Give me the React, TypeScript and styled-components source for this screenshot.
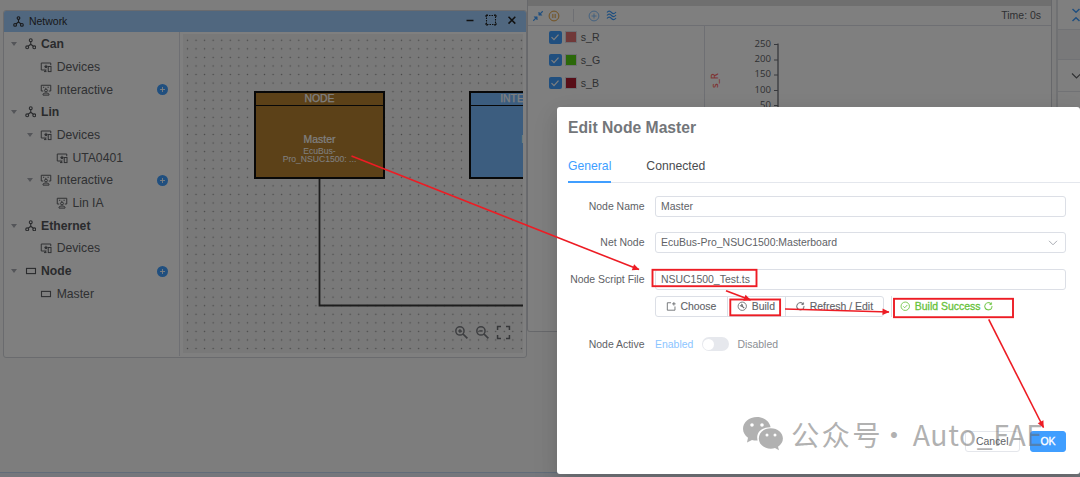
import React from "react";
import styled, { createGlobalStyle } from "styled-components";

const Global = createGlobalStyle`
  * { box-sizing: border-box; }
  html, body { margin: 0; padding: 0; overflow: hidden; }
  body { font-family: "Liberation Sans", Arial, sans-serif; font-size: 10.46px; color: #606266; }
`;

const Screen = styled.div`
  position: relative;
  width: 1080px;
  height: 477px;
  overflow: hidden;
  display: flex;
  flex-direction: column;
  background: #fafafa;
`;
const Desktop = styled.div`
  position: relative;
  flex: 1;
  overflow: hidden;
`;
const StatusBar = styled.div`
  height: 5px;
  background: #eaeff8;
  border-top: 1px solid #c4d8f2;
`;

/* Network window */
const NetWindow = styled.section`
  position: absolute;
  left: 3px;
  top: 10px;
  width: 524px;
  height: 348px;
  display: flex;
  flex-direction: column;
  background: #fff;
  border: 1px solid #d4d7dc;
  border-radius: 3px;
  overflow: hidden;
`;
const TitleBar = styled.header`
  height: 21px;
  flex: none;
  display: flex;
  align-items: center;
  padding: 0 8px 0 8.5px;
  gap: 5.5px;
  background: #a0cfff;
  color: #303133;
`;
const TitleText = styled.span`
  flex: 1;
  line-height: 20px;
`;
const WindowButtons = styled.div`
  display: flex;
  align-items: center;
  gap: 9px;
  padding-bottom: 3px;
`;
const NetBody = styled.div`
  flex: 1;
  display: flex;
  min-height: 0;
`;
const Tree = styled.nav`
  width: 176px;
  flex: none;
  padding-top: 0.8px;
  border-right: 1px solid #dcdfe6;
  height: 324px;
`;
const TreeRow = styled.div<{ $level: number; $bold?: boolean }>`
  height: 22.7px;
  display: flex;
  align-items: center;
  padding-left: ${(p) => p.$level * 15.7}px;
  padding-right: 11px;
  font-size: 12.2px;
  font-weight: ${(p) => (p.$bold ? 700 : 400)};
  color: ${(p) => (p.$bold ? "#55575b" : "#606266")};
`;
const Caret = styled.span<{ $hidden?: boolean }>`
  width: 20.5px;
  flex: none;
  display: flex;
  justify-content: center;
  visibility: ${(p) => (p.$hidden ? "hidden" : "visible")};
  &::before {
    content: "";
    border: 3.3px solid transparent;
    border-top: 4px solid #a8abb2;
    border-bottom: 0;
  }
`;
const TreeIcon = styled.span`
  width: 12px;
  margin-right: 4.5px;
  display: flex;
`;
const TreeLabel = styled.span`
  flex: 1;
  white-space: nowrap;
`;
const CanvasArea = styled.div`
  position: relative;
  flex: 1;
  margin: 2px 3px 4px 3px;
  overflow: hidden;
  background-color: #f3f3f3;
  background-image: radial-gradient(circle, #909090 0.5px, transparent 1.05px);
  background-size: 8.573px 8.573px;
  background-position: 0.2px 2px;
`;
const GraphNode = styled.div<{ $x: number; $bg: string }>`
  position: absolute;
  left: ${(p) => p.$x}px;
  top: 57px;
  width: 131px;
  height: 87.5px;
  border: 2px solid #111;
  background: ${(p) => p.$bg};
  color: #fff;
  text-align: center;
  display: flex;
  flex-direction: column;
`;
const NodeHead = styled.div`
  height: 12.5px;
  line-height: 12.5px;
  border-bottom: 1px solid #111;
  font-size: 10.4px;
  -webkit-text-stroke: 0.25px currentColor;
`;
const NodeMain = styled.div`
  flex: 1;
  padding-top: 27px;
  font-size: 10.4px;
  line-height: 14px;
  -webkit-text-stroke: 0.2px currentColor;
`;
const NodeSub = styled.div`
  font-size: 8.6px;
  line-height: 8.7px;
  -webkit-text-stroke: 0;
`;
const Wires = styled.svg`
  position: absolute;
  inset: 0;
`;
const CanvasTools = styled.div`
  position: absolute;
  right: 12px;
  bottom: 13.5px;
  display: flex;
  gap: 6px;
`;

/* Trace window */
const PlotWindow = styled.section`
  position: absolute;
  left: 527px;
  top: 0;
  width: 525px;
  height: 332px;
  display: flex;
  flex-direction: column;
  border: 1px solid #cfd1d6;
  border-top: 0;
  border-radius: 0 0 3px 3px;
  background: #fff;
`;
const PlotTitle = styled.div`
  height: 6px;
  background: #dedede;
`;
const PlotToolbar = styled.div`
  height: 20px;
  display: flex;
  align-items: center;
  padding: 0 10px 0 4px;
  border-bottom: 1px solid #dcdfe6;
`;
const ToolSep = styled.i`
  width: 1px;
  height: 13px;
  margin: 0 13.5px;
  background: #dcdfe6;
`;
const Time = styled.span`
  margin-left: auto;
  line-height: 18px;
`;
const PlotBody = styled.div`
  flex: 1;
  display: flex;
`;
const SignalList = styled.div`
  width: 177px;
  border-right: 1px solid #dcdfe6;
`;
const Signal = styled.label`
  height: 22.8px;
  display: flex;
  align-items: center;
  padding-left: 21px;
  font-size: 10.6px;
`;
const Check = styled.span`
  width: 12.5px;
  height: 12.5px;
  border-radius: 2px;
  background: #409eff;
  display: flex;
  align-items: center;
  justify-content: center;
  margin-right: 3.7px;
`;
const Swatch = styled.span<{ $c: string }>`
  width: 12px;
  height: 12px;
  border: 1px solid #dcdfe6;
  background: ${(p) => p.$c};
  margin-right: 3.5px;
`;

/* Side pane */
const SidePane = styled.aside`
  position: absolute;
  left: 1056px;
  top: 0;
  width: 40px;
  bottom: 0;
  border-left: 2px solid #e0e2e6;
  background: #fff;
`;
const SideRow = styled.div<{ $h: number; $bg?: string }>`
  height: ${(p) => p.$h}px;
  display: flex;
  align-items: center;
  padding-left: 13px;
  border-bottom: 1px solid #e2e4ea;
  background: ${(p) => p.$bg || "#fff"};
`;

/* Dialog */
const Overlay = styled.div`
  position: absolute;
  inset: 0;
  display: flex;
  justify-content: flex-end;
  align-items: flex-end;
  padding-bottom: 3.5px;
  background: rgba(0, 0, 0, 0.5);
`;
const Dialog = styled.div`
  width: 523px;
  height: 367px;
  display: flex;
  flex-direction: column;
  background: #fff;
  border-radius: 3px;
  box-shadow: 0 10px 28px 3px rgba(0, 0, 0, 0.06), 0 7px 17px rgba(0, 0, 0, 0.1);
`;
const DialogTitle = styled.h2`
  margin: 0;
  padding: 10px 11px 0;
  font-size: 15.7px;
  line-height: 22px;
  font-weight: 700;
  color: #73767a;
`;
const Tabs = styled.div`
  display: flex;
  gap: 35px;
  margin: 10px 0 0 11px;
  height: 34.5px;
  border-bottom: 1.7px solid #e4e7ed;
`;
const Tab = styled.button<{ $active?: boolean }>`
  height: 34.5px;
  padding: 2px 0 0;
  border: 0;
  border-bottom: 2px solid ${(p) => (p.$active ? "#409eff" : "transparent")};
  background: none;
  font: 12.2px "Liberation Sans", Arial, sans-serif;
  color: ${(p) => (p.$active ? "#409eff" : "#4a4c50")};
`;
const Form = styled.div`
  display: flex;
  flex-direction: column;
  padding: 12.5px 14px 0 0;
`;
const Field = styled.div<{ $h?: number }>`
  display: flex;
  align-items: center;
  height: 21px;
  margin-bottom: ${(p) => p.$h ?? 15.7}px;
`;
const Label = styled.label`
  width: 87.5px;
  margin-right: 10.5px;
  text-align: right;
  white-space: nowrap;
`;
const Input = styled.div`
  flex: 1;
  height: 21px;
  display: flex;
  align-items: center;
  justify-content: space-between;
  padding: 0 7px 0 5px;
  border: 1px solid #dcdfe6;
  border-radius: 3px;
`;
const ButtonGroup = styled.div`
  display: flex;
  height: 21px;
  border: 1px solid #dcdfe6;
  border-radius: 3px;
`;
const GroupButton = styled.button<{ $w: number }>`
  width: ${(p) => p.$w}px;
  padding: 0 1px 0 0;
  display: flex;
  align-items: center;
  justify-content: center;
  gap: 4.3px;
  border: 0;
  background: none;
  font: inherit;
  color: inherit;
  -webkit-text-stroke: 0.1px currentColor;
  & + & {
    border-left: 1px solid #dcdfe6;
  }
`;
const Result = styled.div`
  display: flex;
  align-items: center;
  gap: 4.3px;
  height: 21px;
  margin-left: 7px;
  padding-left: 8px;
  border-left: 1px solid #dcdfe6;
  color: #67c23a;
  -webkit-text-stroke: 0.3px currentColor;
`;
const ResultRefresh = styled.span`
  display: flex;
  margin-left: -2px;
`;
const SwitchText = styled.span<{ $on?: boolean }>`
  color: ${(p) => (p.$on ? "#8cc5ff" : "#8c8f94")};
`;
const Switch = styled.span`
  width: 27px;
  height: 14px;
  margin: 0 8.5px;
  padding: 1.5px;
  border-radius: 7px;
  background: #e6e8ed;
  &::before {
    content: "";
    display: block;
    width: 11px;
    height: 11px;
    border-radius: 50%;
    background: #fff;
  }
`;
const Footer = styled.footer`
  margin-top: auto;
  display: flex;
  justify-content: flex-end;
  gap: 10.5px;
  padding: 0 14px 21.5px 0;
`;
const FootButton = styled.button<{ $primary?: boolean }>`
  width: ${(p) => (p.$primary ? 36 : 54.5)}px;
  height: 21px;
  padding: 0;
  font: inherit;
  border-radius: 3px;
  border: 1px solid ${(p) => (p.$primary ? "#409eff" : "#e4e6eb")};
  background: ${(p) => (p.$primary ? "#409eff" : "#fff")};
  color: ${(p) => (p.$primary ? "#fff" : "#606266")};
  -webkit-text-stroke: ${(p) => (p.$primary ? 0.35 : 0)}px currentColor;
`;

/* Annotation layers */
const Watermark = styled.div`
  position: absolute;
  left: 742px;
  top: 411.5px;
  height: 44px;
  display: flex;
  align-items: center;
  color: rgba(100, 100, 100, 0.5);
  font-family: "Noto Sans CJK SC", sans-serif;
  font-weight: 400;
  font-size: 28.4px;
  line-height: 44px;
  white-space: pre;
`;
const MarkText = styled.span<{ $ml: number; $ls?: number }>`
  margin-left: ${(p) => p.$ml}px;
  letter-spacing: ${(p) => p.$ls || 0}px;
`;
const Marks = styled.svg`
  position: absolute;
  inset: 0;
`;

const NetworkIcon = ({ s = 11.5 }: { s?: number }) => (
  <svg width={s} height={s} viewBox="0 0 24 24" fill="none" stroke="currentColor" strokeWidth="2.4">
    <circle cx="12" cy="4.6" r="3" />
    <circle cx="4.6" cy="19.4" r="3" />
    <circle cx="19.4" cy="19.4" r="3" />
    <path d="M12 7.6v6M12 13l-5.4 4.2M12 13l5.4 4.2" />
  </svg>
);
const DevicesIcon = () => (
  <svg width="12" height="12" viewBox="0 0 24 24" fill="none" stroke="currentColor" strokeWidth="2">
    <path d="M13 18H2.500V4h19v4.500M8 21.200h5M10.500 18v3" />
    <rect x="16.5" y="11" width="5.5" height="10.2" />
    <path fill="currentColor" stroke="none" d="M12 6.600l1.300 2.900 3.100.3-2.300 2 .7 3.100-2.800-1.600-2.800 1.600.7-3.100-2.300-2 3.100-.3z" />
  </svg>
);
const InteractiveIcon = () => (
  <svg width="12" height="12" viewBox="0 0 24 24" fill="none" stroke="currentColor" strokeWidth="2">
    <path d="M6.500 14H2.500V2.500h19V14h-4" />
    <circle cx="12" cy="13" r="2.8" />
    <path d="M6 22.200v-1.600c0-1.600 3-2.600 6-2.600s6 1 6 2.600v1.600z" />
    <path d="M6 6.500h2.500M10.500 8.500h2M15 6.500h2.500" />
  </svg>
);
const NodeIcon = () => (
  <svg width="12" height="12" viewBox="0 0 24 24" fill="none" stroke="currentColor" strokeWidth="2.2">
    <rect x="3" y="6.8" width="18" height="10.4" />
  </svg>
);
const PlusDot = () => (
  <svg width="11" height="11" viewBox="0 0 22 22">
    <circle cx="11" cy="11" r="11" fill="#409eff" />
    <path d="M11 6v10M6 11h10" stroke="#fff" strokeWidth="1.8" />
  </svg>
);
const RefreshIcon = () => (
  <svg width="10.5" height="10.5" viewBox="0 0 1024 1024" fill="currentColor" stroke="currentColor" strokeWidth="25">
    <path d="M784.512 230.272v-50.56a32 32 0 1 1 64 0v149.056a32 32 0 0 1-32 32H667.52a32 32 0 1 1 0-64h92.992A320 320 0 1 0 524.8 833.152a320 320 0 0 0 320-320h64a384 384 0 0 1-384 384 384 384 0 0 1-384-384 384 384 0 0 1 643.712-282.88z" />
  </svg>
);
const ChooseIcon = () => (
  <svg width="10.5" height="10.5" viewBox="0 0 24 24" fill="none" stroke="currentColor" strokeWidth="1.9">
    <path d="M11.500 4H3v17h17.500v-8.500M18 2.500v8M14 6.500h8" />
  </svg>
);
const BuildIcon = () => (
  <svg width="10.5" height="10.5" viewBox="0 0 24 24" fill="none" stroke="currentColor" strokeWidth="1.9">
    <circle cx="12" cy="12" r="9.5" />
    <path d="M11.500 11.500l5 5" strokeWidth="2.6" />
    <path d="M7 9.800a3.200 3.200 0 0 0 5.600 1.600A3.200 3.200 0 0 0 9.800 6.700l1 2.400-1.700 1.600z" fill="currentColor" strokeWidth="1" />
  </svg>
);
const CircleCheck = () => (
  <svg width="10.5" height="10.5" viewBox="0 0 24 24" fill="none" stroke="currentColor" strokeWidth="1.9">
    <circle cx="12" cy="12" r="9.6" />
    <path d="M7.500 12.200l3.200 3.200 6-6.200" />
  </svg>
);
const ZoomIcon = ({ plus }: { plus?: boolean }) => (
  <svg width="15" height="15" viewBox="0 0 24 24" fill="none" stroke="#7b7d82" strokeWidth="2.4">
    <circle cx="9.5" cy="9.5" r="6.6" />
    <path d="M14.400 14.400l7 7" strokeWidth="2.8" />
    <path d={plus ? "M9.5 6.8v5.4M6.8 9.500h5.400" : "M6.8 9.500h5.400"} />
  </svg>
);
const FitIcon = () => (
  <svg width="15" height="15" viewBox="0 0 24 24" fill="none" stroke="#6c6e73" strokeWidth="2.4">
    <path d="M2.500 8V2.500H8M16 2.500h5.500V8M21.500 16v5.500H16M8 21.500H2.500V16" />
  </svg>
);

const icons = { net: NetworkIcon, dev: DevicesIcon, ia: InteractiveIcon, node: NodeIcon };
type Row = { level: number; icon: keyof typeof icons; text: string; open?: boolean; add?: boolean };
const rows: Row[] = [
  { level: 0, icon: "net", text: "Can", open: true },
  { level: 1, icon: "dev", text: "Devices" },
  { level: 1, icon: "ia", text: "Interactive", add: true },
  { level: 0, icon: "net", text: "Lin", open: true },
  { level: 1, icon: "dev", text: "Devices", open: true },
  { level: 2, icon: "dev", text: "UTA0401" },
  { level: 1, icon: "ia", text: "Interactive", open: true, add: true },
  { level: 2, icon: "ia", text: "Lin IA" },
  { level: 0, icon: "net", text: "Ethernet", open: true },
  { level: 1, icon: "dev", text: "Devices" },
  { level: 0, icon: "node", text: "Node", open: true, add: true },
  { level: 1, icon: "node", text: "Master" },
];
const signals = [
  { name: "s_R", color: "#e07070" },
  { name: "s_G", color: "#56d012" },
  { name: "s_B", color: "#b01c30" },
];
const ticks = [
  { v: 250, y: 44 },
  { v: 200, y: 59.5 },
  { v: 150, y: 74.5 },
  { v: 100, y: 90 },
  { v: 50, y: 105 },
];

const Arrow = ({ a, b }: { a: [number, number]; b: [number, number] }) => {
  const angle = (Math.atan2(b[1] - a[1], b[0] - a[0]) * 180) / Math.PI;
  return (
    <g>
      <path d={`M${a[0]} ${a[1]}L${b[0]} ${b[1]}`} strokeWidth="1.6" />
      <path
        d="M0.5 0L-6.5 -3.200V3.200Z"
        fill="#ed1c24"
        stroke="none"
        transform={`translate(${b[0]} ${b[1]}) rotate(${angle})`}
      />
    </g>
  );
};

const WaveIcon = styled.svg`
  margin-left: 6.5px;
`;
const PauseIcon = styled.svg`
  margin-left: 3.5px;
`;

export default function App() {
  return (
    <Screen>
      <Global />
      <Desktop>
        <NetWindow>
          <TitleBar>
            <NetworkIcon s={11} />
            <TitleText>Network</TitleText>
            <WindowButtons>
              <svg width="12" height="12" viewBox="0 0 12 12" stroke="#222" strokeWidth="1.5">
                <path d="M2.500 6.500h7" />
              </svg>
              <svg width="12" height="12" viewBox="0 0 12 12" fill="none" stroke="#222">
                <rect x="1.5" y="1.5" width="9" height="9" strokeDasharray="1.5 1" strokeWidth="1.1" />
                <path d="M1 3V1h2M9 1h2v2M11 9v2H9M3 11H1V9" strokeWidth="1" />
              </svg>
              <svg width="12" height="12" viewBox="0 0 12 12" stroke="#222" strokeWidth="1.5">
                <path d="M2.500 2.800l6.800 6.800M9.300 2.800L2.500 9.600" />
              </svg>
            </WindowButtons>
          </TitleBar>
          <NetBody>
            <Tree>
              {rows.map((r, i) => {
                const Icon = icons[r.icon];
                return (
                  <TreeRow key={i} $level={r.level} $bold={r.level === 0}>
                    <Caret $hidden={!r.open} />
                    <TreeIcon>
                      <Icon />
                    </TreeIcon>
                    <TreeLabel>{r.text}</TreeLabel>
                    {r.add && <PlusDot />}
                  </TreeRow>
                );
              })}
            </Tree>
            <CanvasArea>
              <Wires width="340" height="320" fill="none" stroke="#3a3a3a" strokeWidth="1.8">
                <path d="M136.500 144V271.500H341" />
              </Wires>
              <GraphNode $x={71} $bg="#b88230">
                <NodeHead>NODE</NodeHead>
                <NodeMain>
                  Master
                  <NodeSub>
                    EcuBus-
                    <br />
                    Pro_NSUC1500: ...
                  </NodeSub>
                </NodeMain>
              </GraphNode>
              <GraphNode $x={286} $bg="#79bbff">
                <NodeHead>INTERACTIVE</NodeHead>
                <NodeMain>Lin IA</NodeMain>
              </GraphNode>
              <CanvasTools>
                <ZoomIcon plus />
                <ZoomIcon />
                <FitIcon />
              </CanvasTools>
            </CanvasArea>
          </NetBody>
        </NetWindow>

        <PlotWindow>
          <PlotTitle />
          <PlotToolbar>
            <svg width="12" height="12" viewBox="0 0 24 24" fill="none" stroke="#409eff" strokeWidth="2.2">
              <path d="M21.500 2.500l-7 7M2.500 21.500l7-7" />
              <path d="M13.500 4v6.500H20zM4 13.500h6.500V20z" fill="#409eff" strokeWidth="1" />
            </svg>
            <PauseIcon width="12" height="12" viewBox="0 0 24 24" fill="none" stroke="#e6a23c" strokeWidth="2">
              <circle cx="12" cy="12" r="9.8" />
              <path d="M9.700 8v8M14.300 8v8" />
            </PauseIcon>
            <ToolSep />
            <svg width="12" height="12" viewBox="0 0 24 24" fill="none" stroke="#79bbff" strokeWidth="1.8">
              <circle cx="12" cy="12" r="9.8" />
              <path d="M12 7v10M7 12h10" />
            </svg>
            <WaveIcon width="11" height="11" viewBox="0 0 22 22" fill="none" stroke="#409eff" strokeWidth="2.4">
              {[5, 11, 17].map((y) => (
                <path key={y} d={`M2 ${y}c3-4 6-3 9 0s6 3 9-1`} />
              ))}
            </WaveIcon>
            <Time>Time: 0s</Time>
          </PlotToolbar>
          <PlotBody>
            <SignalList>
              {signals.map((s) => (
                <Signal key={s.name}>
                  <Check>
                    <svg width="10" height="10" viewBox="0 0 10 10" fill="none" stroke="#fff" strokeWidth="1.2">
                      <path d="M1.500 5.200l2.500 2.500 4.500-5" />
                    </svg>
                  </Check>
                  <Swatch $c={s.color} />
                  {s.name}
                </Signal>
              ))}
            </SignalList>
            <svg width="346" height="305" viewBox="705 26 346 305" fontFamily="Open Sans, sans-serif" fontSize="9.6">
              <path d="M778 43.500V200" stroke="#6e7079" strokeWidth="1.3" />
              {ticks.map((t) => (
                <g key={t.v}>
                  <path d={`M774 ${t.y + 0.5}H778`} stroke="#6e7079" />
                  <text x="771" y={t.y + 2.7} textAnchor="end" fill="#606266">
                    {t.v}
                  </text>
                </g>
              ))}
              <text transform="translate(718 88) rotate(-90)" fill="#ff5c5c" stroke="#ff5c5c" strokeWidth="0.2">
                s_R
              </text>
            </svg>
          </PlotBody>
        </PlotWindow>

        <SidePane>
          <SideRow $h={30}>
            <svg width="11" height="14" viewBox="0 0 11 14" fill="none" stroke="#409eff" strokeWidth="1.5" style={{ flex: "none" }}>
              <path d="M1.500 1l3.500 3.200L8.500 1M1.500 13L5 9.800 8.500 13" />
            </svg>
          </SideRow>
          <SideRow $h={30} $bg="#f3f3f4" />
          <SideRow $h={32}>
            <svg width="11" height="8" viewBox="0 0 11 8" fill="none" stroke="#606266" strokeWidth="1.2" style={{ flex: "none" }}>
              <path d="M1 1.500l4.500 4.500L10 1.500" />
            </svg>
          </SideRow>
        </SidePane>
      </Desktop>
      <StatusBar />

      <Overlay>
        <Dialog>
          <DialogTitle>Edit Node Master</DialogTitle>
          <Tabs>
            <Tab $active>General</Tab>
            <Tab>Connected</Tab>
          </Tabs>
          <Form>
            <Field>
              <Label>Node Name</Label>
              <Input>Master</Input>
            </Field>
            <Field>
              <Label>Net Node</Label>
              <Input>
                <span>EcuBus-Pro_NSUC1500:Masterboard</span>
                <svg width="10" height="6" viewBox="0 0 10 6" fill="none" stroke="#a8abb2">
                  <path d="M1 .8l4 4 4-4" />
                </svg>
              </Input>
            </Field>
            <Field $h={6}>
              <Label>Node Script File</Label>
              <Input>NSUC1500_Test.ts</Input>
            </Field>
            <Field $h={16.8}>
              <Label />
              <ButtonGroup>
                <GroupButton $w={71}>
                  <ChooseIcon />
                  Choose
                </GroupButton>
                <GroupButton $w={58}>
                  <BuildIcon />
                  Build
                </GroupButton>
                <GroupButton $w={98}>
                  <RefreshIcon />
                  Refresh / Edit
                </GroupButton>
              </ButtonGroup>
              <Result>
                <CircleCheck />
                Build Success
                <ResultRefresh>
                  <RefreshIcon />
                </ResultRefresh>
              </Result>
            </Field>
            <Field>
              <Label>Node Active</Label>
              <SwitchText $on>Enabled</SwitchText>
              <Switch />
              <SwitchText>Disabled</SwitchText>
            </Field>
          </Form>
          <Footer>
            <FootButton>Cancel</FootButton>
            <FootButton $primary>OK</FootButton>
          </Footer>
        </Dialog>
      </Overlay>

      <Watermark>
        <svg width="42" height="36" viewBox="0 0 42 36" fill="currentColor">
          <path
            fillRule="evenodd"
            d="M15 1C7 1 1 6.200 1 12.800c0 3.700 2 6.900 5 9L5 26.500l5-2.600c1.800.5 3.700.7 5.600.6C13.500 16.500 20 11 28.600 11.200 27.300 5 21.600 1 15 1zM10 7.200a1.800 1.800 0 1 1 0 3.600 1.800 1.800 0 0 1 0-3.600zM20 7.200a1.800 1.800 0 1 1 0 3.600 1.800 1.800 0 0 1 0-3.600z"
          />
          <path
            fillRule="evenodd"
            d="M28.800 12.300c-6.800 0-12 4.500-12 10.200s5.200 10.200 12 10.200c1.500 0 2.900-.2 4.200-.6l4 2.100-1-3.500c3-1.900 4.900-4.900 4.900-8.200 0-5.700-5.300-10.200-12.100-10.200zM25 17.600a1.500 1.500 0 1 1 0 3 1.500 1.500 0 0 1 0-3zM33 17.600a1.500 1.500 0 1 1 0 3 1.500 1.500 0 0 1 0-3z"
          />
        </svg>
        <MarkText $ml={7} $ls={2.2}>公众号</MarkText>
        <MarkText $ml={-3}>·</MarkText>
        <MarkText $ml={4.5} $ls={0.6}>Auto_FAE</MarkText>
      </Watermark>

      <Marks width="1080" height="477" fill="none" stroke="#ed1c24" strokeWidth="1.9">
        <rect x="652.5" y="269.8" width="104" height="16.4" />
        <rect x="730.3" y="299.5" width="49.8" height="15.8" />
        <rect x="894" y="298.8" width="119" height="18.4" />
        <Arrow a={[351.5, 156]} b={[639, 269.6]} />
        <Arrow a={[726, 290.7]} b={[750.5, 300]} />
        <Arrow a={[785, 309]} b={[889, 312]} />
        <Arrow a={[988.7, 319.3]} b={[1043.5, 427.5]} />
      </Marks>
    </Screen>
  );
}
